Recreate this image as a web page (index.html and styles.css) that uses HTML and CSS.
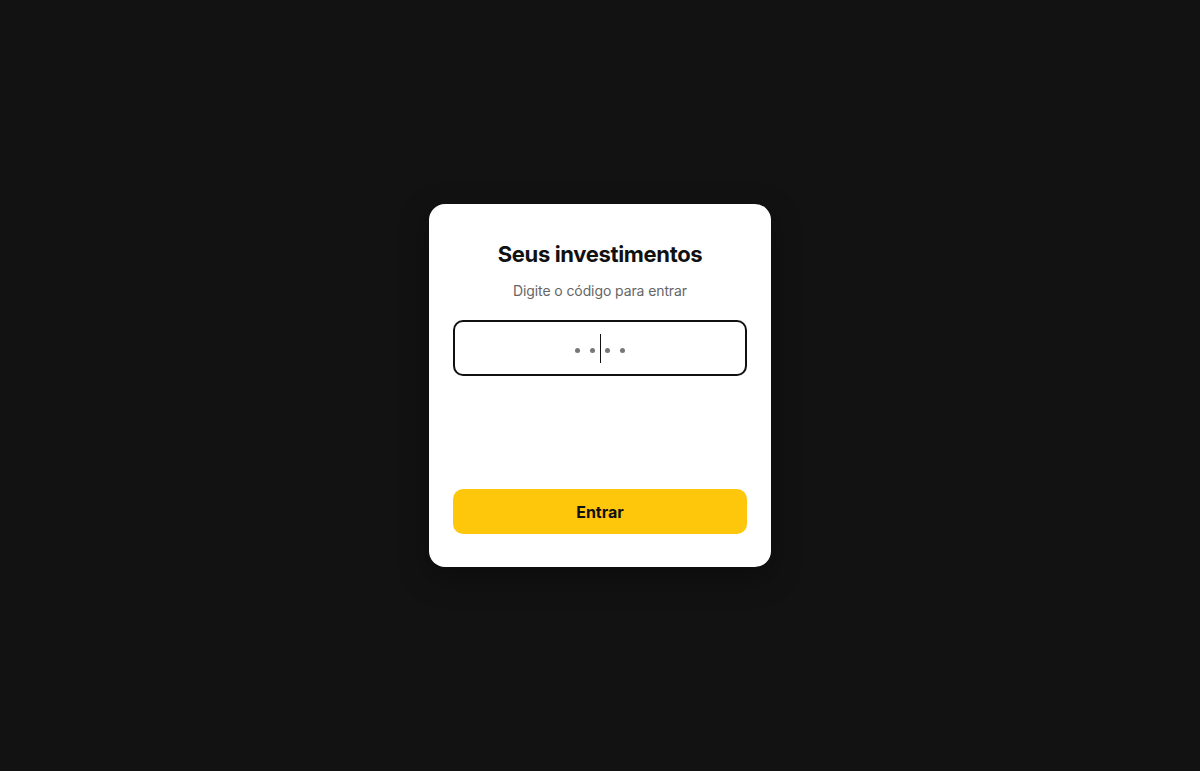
FILE: index.html
```html
<!DOCTYPE html>
<html lang="pt">
<head>
<meta charset="utf-8">
<title>Seus investimentos</title>
<link rel="stylesheet" href="styles.css">
</head>
<body>
<main class="page">
  <form class="card">
    <h1 class="title">Seus investimentos</h1>
    <p class="subtitle">Digite o código para entrar</p>
    <div class="code-input">
      <span class="dot"></span><span class="dot"></span><span class="caret"></span><span class="dot"></span><span class="dot"></span>
    </div>
    <div class="spacer"></div>
    <button type="button" class="btn">Entrar</button>
  </form>
</main>
</body>
</html>
```
FILE: styles.css
```css
* { box-sizing: border-box; }
html, body { margin: 0; height: 100%; }
body {
  background: #121212;
  font-family: Inter, "Noto Sans", sans-serif;
}
.page {
  height: 100%;
  display: flex;
  align-items: center;
  justify-content: center;
}
.card {
  width: 342px;
  background: #fff;
  border-radius: 16px;
  padding: 36px 24px 33px;
  display: flex;
  flex-direction: column;
  align-items: stretch;
  box-shadow: 0 10px 30px rgba(0,0,0,0.35);
}
.title {
  margin: 0;
  text-align: center;
  font-size: 22px;
  line-height: 28px;
  font-weight: 700;
  color: #111;
  letter-spacing: -0.35px;
}
.subtitle {
  margin: 13px 0 0;
  text-align: center;
  font-size: 14px;
  line-height: 20px;
  color: #666;
  letter-spacing: -0.1px;
}
.code-input {
  margin-top: 19px;
  height: 56px;
  border: 2px solid #111;
  border-radius: 10px;
  display: flex;
  align-items: center;
  justify-content: center;
}
.dot {
  width: 5px;
  height: 5px;
  border-radius: 50%;
  background: #777;
  margin: 4px 5px 0;
}
.caret {
  width: 1px;
  height: 29px;
  background: #111;
  margin: 0 -0.5px;
}
.spacer { height: 113px; }
.btn {
  height: 45px;
  border: 0;
  border-radius: 10px;
  background: #FFC70B;
  color: #111;
  font-family: inherit;
  font-size: 16px;
  font-weight: 700;
}
```
